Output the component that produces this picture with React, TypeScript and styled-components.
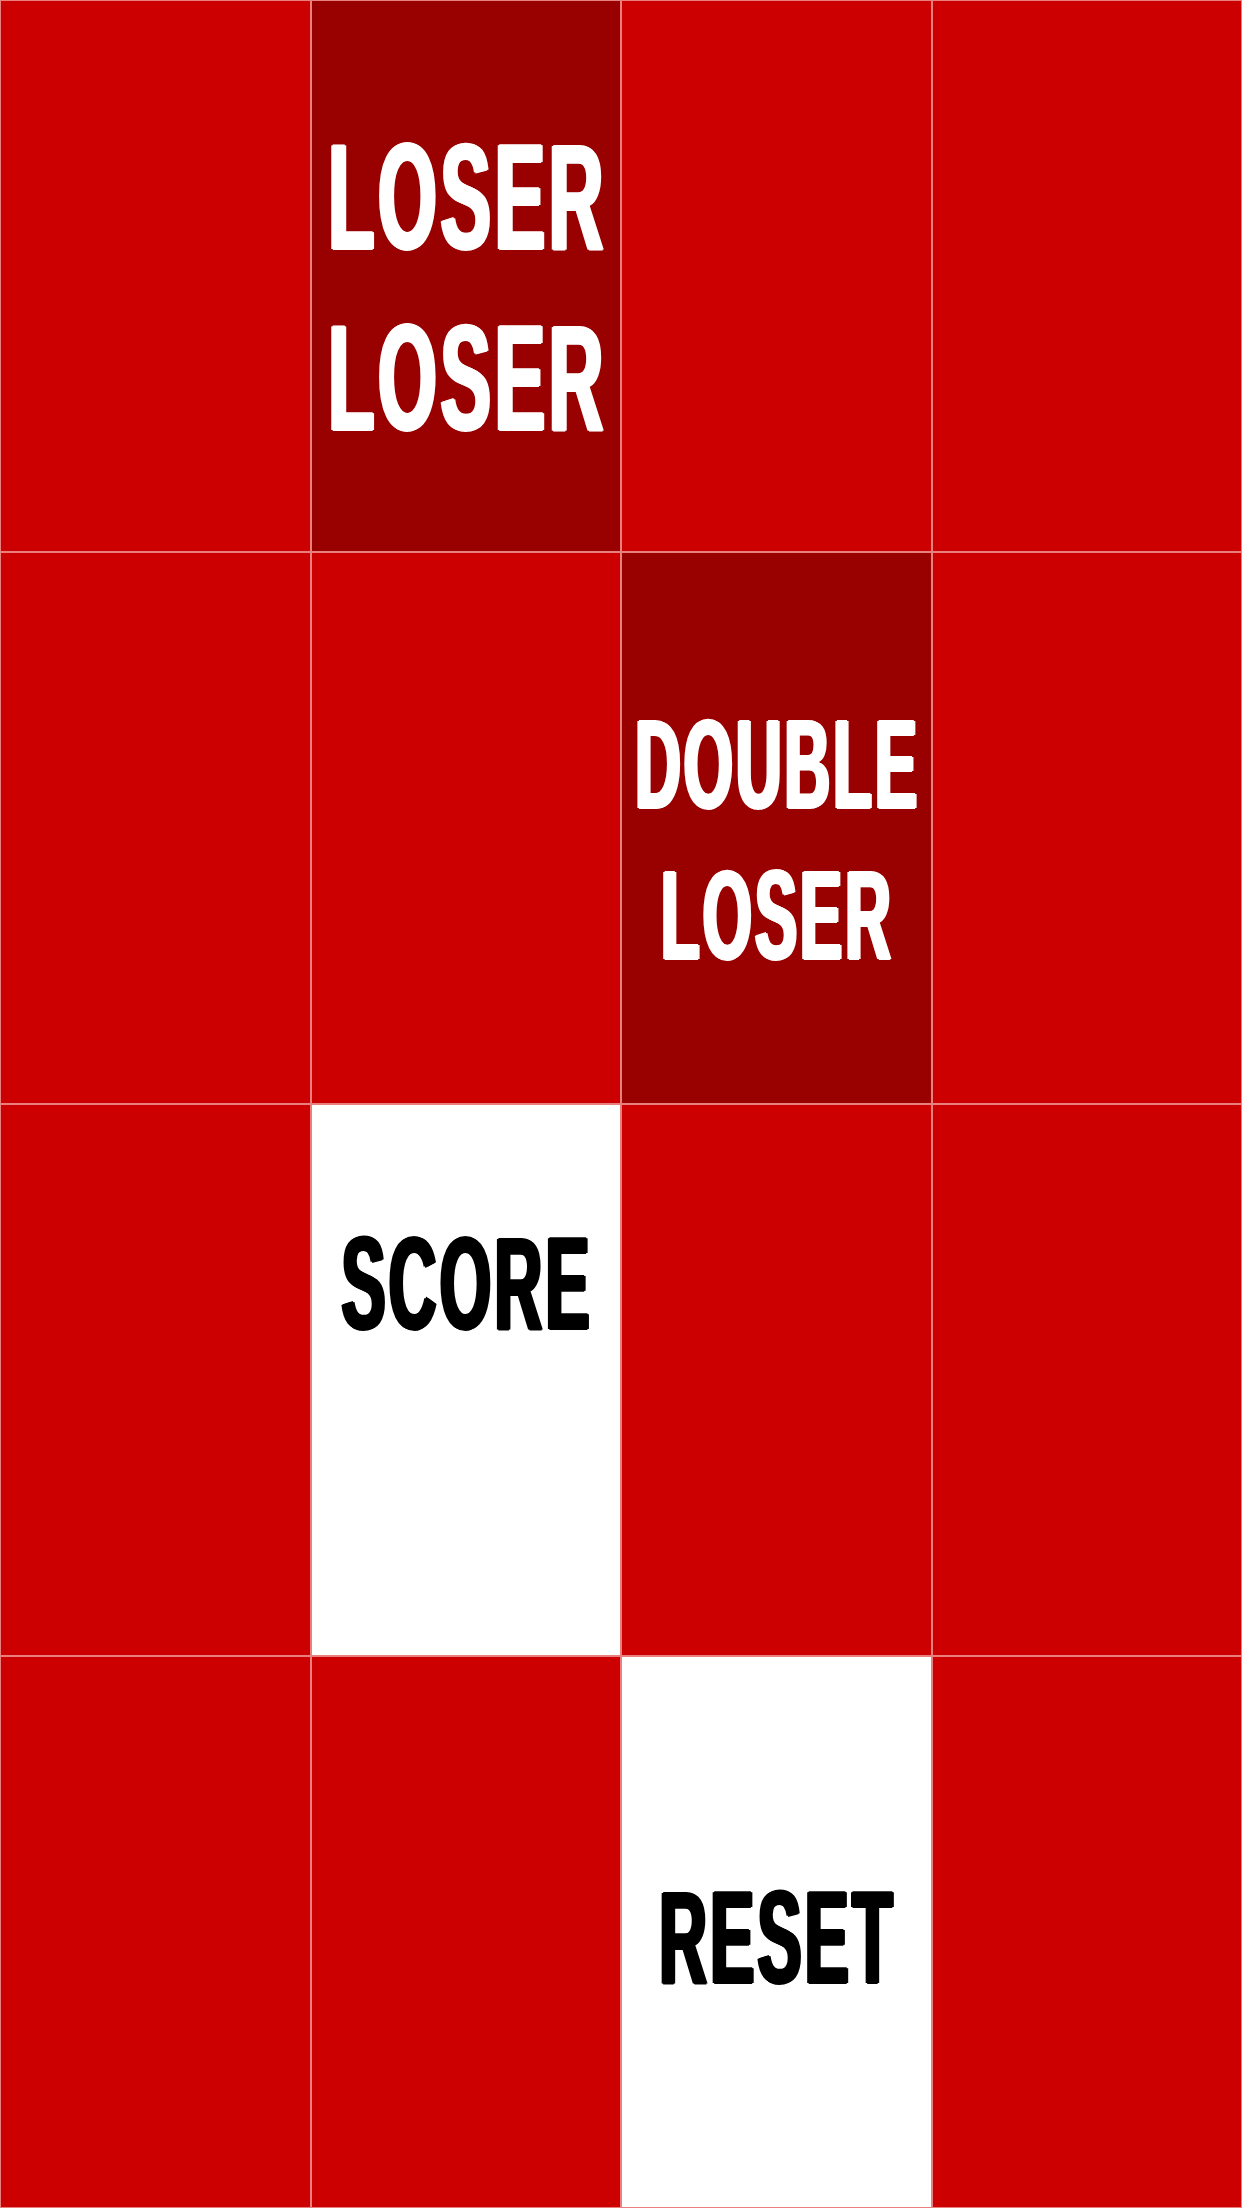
import React from "react";
import styled, { createGlobalStyle } from "styled-components";

type Tone = "red" | "dark" | "white";

const GlobalStyle = createGlobalStyle`
    html, body {
        margin: 0;
        padding: 0;
        background: #cc0000;
    }
`;

const Board = styled.div`
    display: grid;
    grid-template-columns: repeat(4, minmax(0, 1fr));
    grid-template-rows: repeat(4, 552px);
    width: 1242px;
    height: 2208px;
    overflow: hidden;
`;

const tones: Record<Tone, { bg: string; fg: string }> = {
    red: { bg: "#cc0000", fg: "#ffffff" },
    dark: { bg: "#990000", fg: "#ffffff" },
    white: { bg: "#ffffff", fg: "#000000" },
};

const Tile = styled.div<{ $tone: Tone; $nudge?: number }>`
    box-sizing: border-box;
    min-width: 0;
    display: flex;
    flex-direction: column;
    align-items: center;
    justify-content: center;
    border: 1px solid #e98080;
    background-color: ${({ $tone }) => tones[$tone].bg};
    color: ${({ $tone }) => tones[$tone].fg};
    padding-top: ${({ $nudge = 0 }) => ($nudge > 0 ? $nudge * 2 : 0)}px;
    padding-bottom: ${({ $nudge = 0 }) => ($nudge < 0 ? -$nudge * 2 : 0)}px;
`;

// condensed look: bold sans squeezed sideways, stems thickened a little
const Label = styled.span<{ $size: number }>`
    display: block;
    flex: none;
    font-family: "Liberation Sans", Arial, sans-serif;
    font-weight: 700;
    font-size: ${({ $size }) => $size}px;
    line-height: 1.2;
    letter-spacing: 0.05em;
    padding-left: 0.05em;
    text-align: center;
    white-space: nowrap;
    transform: scaleX(0.5);
    -webkit-text-stroke: 2px currentColor;
    text-shadow: 2px 0 0 currentColor, -2px 0 0 currentColor, 4px 0 0 currentColor, -4px 0 0 currentColor;
`;

interface Cell {
    tone: Tone;
    lines?: string[];
    size?: number;
    nudge?: number;
}

const cells: Cell[] = [
    { tone: "red" },
    { tone: "dark", lines: ["LOSER", "LOSER"], size: 151, nudge: 11 },
    { tone: "red" },
    { tone: "red" },

    { tone: "red" },
    { tone: "red" },
    { tone: "dark", lines: ["DOUBLE", "LOSER"], size: 126, nudge: 12 },
    { tone: "red" },

    { tone: "red" },
    { tone: "white", lines: ["SCORE"], size: 132, nudge: -96 },
    { tone: "red" },
    { tone: "red" },

    { tone: "red" },
    { tone: "red" },
    { tone: "white", lines: ["RESET"], size: 132, nudge: 6 },
    { tone: "red" },
];

export default function App() {
    return (
        <>
            <GlobalStyle />
            <Board>
                {cells.map((cell, i) => (
                    <Tile key={i} $tone={cell.tone} $nudge={cell.nudge}>
                        {cell.lines?.map((line, j) => (
                            <Label key={j} $size={cell.size ?? 132}>{line}</Label>
                        ))}
                    </Tile>
                ))}
            </Board>
        </>
    );
}
